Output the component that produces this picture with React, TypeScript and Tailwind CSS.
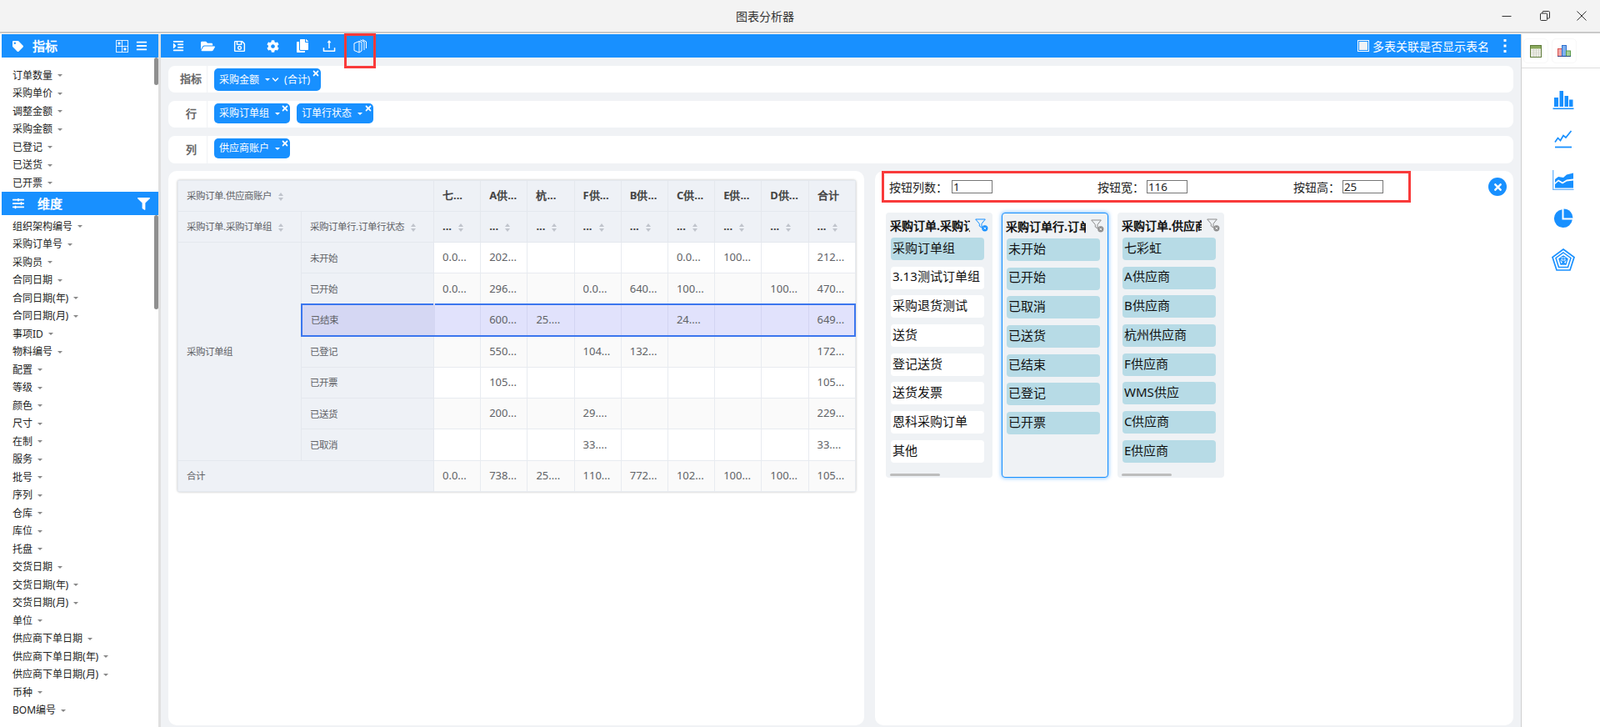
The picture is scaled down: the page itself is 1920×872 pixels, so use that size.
import { FaIndent, FaFolderOpen, FaRegSave, FaCog, FaCopy, FaTag, FaBars, FaSlidersH, FaFilter, FaTimes, FaChevronDown } from 'react-icons/fa';
import { AiOutlineUpload } from 'react-icons/ai';

const metrics = ['订单数量', '采购单价', '调整金额', '采购金额', '已登记', '已送货', '已开票'];
const dimensions = [
    '组织架构编号', '采购订单号', '采购员', '合同日期', '合同日期(年)', '合同日期(月)', '事项ID', '物料编号', '配置', '等级',
    '颜色', '尺寸', '在制', '服务', '批号', '序列', '仓库', '库位', '托盘', '交货日期', '交货日期(年)', '交货日期(月)', '单位',
    '供应商下单日期', '供应商下单日期(年)', '供应商下单日期(月)', '币种', 'BOM编号',
];

const columns = ['七...', 'A供...', '杭...', 'F供...', 'B供...', 'C供...', 'E供...', 'D供...', '合计'];
const rows = [
    { name: '未开始', cells: ['0.0...', '202...', '', '', '', '0.0...', '100...', '', '212...'] },
    { name: '已开始', cells: ['0.0...', '296...', '', '0.0...', '640...', '100...', '', '100...', '470...'] },
    { name: '已结束', cells: ['', '600...', '25....', '', '', '24....', '', '', '649...'] },
    { name: '已登记', cells: ['', '550...', '', '104...', '132...', '', '', '', '172...'] },
    { name: '已开票', cells: ['', '105...', '', '', '', '', '', '', '105...'] },
    { name: '已送货', cells: ['', '200...', '', '29....', '', '', '', '', '229...'] },
    { name: '已取消', cells: ['', '', '', '33....', '', '', '', '', '33....'] },
];
const totals = ['0.0...', '738...', '25....', '110...', '772...', '102...', '100...', '100...', '105...'];

const slicers = [
    { title: '采购订单.采购订单组', active: 1, filtered: true, items: ['采购订单组', '3.13测试订单组', '采购退货测试', '送货', '登记送货', '送货发票', '恩科采购订单', '其他'] },
    { title: '采购订单行.订单行状态', active: 7, focused: true, items: ['未开始', '已开始', '已取消', '已送货', '已结束', '已登记', '已开票'] },
    { title: '采购订单.供应商账户', active: 8, items: ['七彩虹', 'A供应商', 'B供应商', '杭州供应商', 'F供应商', 'WMS供应', 'C供应商', 'E供应商'] },
];

function Caret({ white }: { white?: boolean }) {
    return (
        <span className={`inline-block w-0 h-0 border-x-[3px] border-t-[3px] border-x-transparent ${white ? 'border-t-white' : 'border-t-[#888888]'}`} />
    );
}

function SortIcon() {
    return (
        <span className="inline-flex flex-col gap-[2px] ml-[8px] align-middle">
            <span className="w-0 h-0 border-x-[3.5px] border-b-[4px] border-x-transparent border-b-[#c0c4cc]" />
            <span className="w-0 h-0 border-x-[3.5px] border-t-[4px] border-x-transparent border-t-[#c0c4cc]" />
        </span>
    );
}

function SideItem({ label }: { label: string }) {
    return (
        <div className="flex items-center h-[21.5px] pl-[13px] text-[12px] text-[#222222] whitespace-nowrap">
            {label}
            <span className="ml-[6px] flex"><Caret /></span>
        </div>
    );
}

function Chip({ label, width, height, children }: { label: string; width: string; height: string; children?: React.ReactNode }) {
    return (
        <div className={`relative flex items-center pl-[6px] rounded-[5px] bg-[#1890ff] text-white text-[12px] whitespace-nowrap ${width} ${height}`}>
            {label}
            <span className="ml-[7px] flex"><Caret white /></span>
            {children}
            <FaTimes className="absolute top-[1px] right-[1px] text-[10px] text-white" />
        </div>
    );
}

function FieldRow({ label, height, margin, children }: { label: string; height: string; margin: string; children: React.ReactNode }) {
    return (
        <div className={`flex bg-white rounded-[8px] ${height} ${margin}`}>
            <div className="flex items-center justify-center w-[47px] mr-[8px] pl-[8px] border-r border-[#f0f2f5] text-[13px] font-bold text-[#666666]">{label}</div>
            <div className="flex items-start gap-[8px] pt-[3px]">{children}</div>
        </div>
    );
}

function FilterClear({ blue }: { blue?: boolean }) {
    const color = blue ? '#1890ff' : '#8c8c8c';
    return (
        <svg className="w-[16px] h-[16px]" viewBox="0 0 16 16" fill="none">
            <path d="M0.7 1h11.6L8 6.4V11L5.3 9.2V6.4z" stroke={color} strokeWidth="1" />
            <circle cx="11.8" cy="11.8" r="3.6" fill={color} />
            <path d="M10.4 10.4l2.8 2.8M13.2 10.4l-2.8 2.8" stroke="#ffffff" strokeWidth="0.9" />
        </svg>
    );
}

function BookIcon() {
    return (
        <svg className="w-[17px] h-[17px]" viewBox="0 0 17 17" fill="none" stroke="#ffffff" strokeWidth="1">
            <path d="M1 5L7 2.5V16L1 13.5z" />
            <path d="M7 2.5L10 3.5V14L7 16" />
            <path d="M8.5 1L13 3V13" />
            <path d="M11 0.5L15.5 3V11" />
        </svg>
    );
}

function TableIcon() {
    return (
        <svg className="w-[14px] h-[15px]" viewBox="0 0 14 15">
            <rect x="0.5" y="0.5" width="13" height="14" fill="#f4f4ee" stroke="#5d7a38" />
            <rect x="1" y="1" width="12" height="3.5" fill="#8aa95c" />
            <path d="M1 7h12M1 9.5h12M1 12h12M4.5 4.5V14M7.5 4.5V14M10.5 4.5V14" stroke="#cfd2c4" strokeWidth="0.8" />
        </svg>
    );
}

function BarsIcon() {
    return (
        <svg className="w-[16px] h-[14px]" viewBox="0 0 16 14">
            <rect x="0.5" y="4.5" width="5" height="9" fill="#f3a6a6" stroke="#d9534f" />
            <rect x="5.5" y="0.5" width="5" height="13" fill="#7fb0ee" stroke="#2f6fce" />
            <rect x="10.5" y="7" width="5" height="6.5" fill="#a6cf9a" stroke="#5a9a4a" />
            <path d="M0 13.7h16" stroke="#1f3f8f" />
        </svg>
    );
}

function ChartBar() {
    return (
        <svg className="w-[26px] h-[24px]" viewBox="0 0 26 24" fill="#1890ff">
            <rect x="2" y="9" width="5" height="11" />
            <rect x="8.5" y="1" width="4.5" height="19" />
            <rect x="14.5" y="7" width="4.5" height="13" />
            <rect x="20" y="11.5" width="4.5" height="8.5" />
            <rect x="0.5" y="21.5" width="25" height="1.6" />
        </svg>
    );
}

function ChartLine() {
    return (
        <svg className="w-[22px] h-[22px]" viewBox="0 0 22 22" fill="none" stroke="#1890ff">
            <path d="M1 14.5L4.5 9.5L7.5 12.5L11 6.5L14 9L20.5 1" strokeWidth="1.7" />
            <path d="M1 20.5h20" strokeWidth="1.8" />
        </svg>
    );
}

function ChartArea() {
    return (
        <svg className="w-[26px] h-[24px]" viewBox="0 0 26 24">
            <path d="M0.7 0V23.3H25.5" fill="none" stroke="#6db5fb" strokeWidth="1.3" />
            <path d="M3 11L7 8L13 9L17 5.5L25 3.5V10.5L17 11.5L12 14.5L7 11.5L3 15z" fill="#1890ff" />
            <path d="M3 17L7 13.5L12 16.5L17 13.5L25 12.5V21.5H3z" fill="#1890ff" />
        </svg>
    );
}

function ChartPie() {
    return (
        <svg className="w-[24px] h-[24px]" viewBox="0 0 24 24" fill="#1890ff">
            <path d="M10.5 1.2A11 11 0 1 0 22.8 13.5H10.5z" />
            <path d="M12.5 0.5A11 11 0 0 1 23.5 11.5H12.5z" />
        </svg>
    );
}

function ChartRadar() {
    return (
        <svg className="w-[28px] h-[28px]" viewBox="0 0 28 28" fill="none" stroke="#1890ff">
            <path d="M14 1L27 10.5L22 26H6L1 10.5z" strokeWidth="1.7" />
            <path d="M14 5L23 11.5L19.5 22.5H8.5L5 11.5z" strokeWidth="1.5" />
            <path d="M14 9L19 12.5L17 19H11L9 12.5z" strokeWidth="1.3" />
            <path d="M14 9V19M9 12.5L17 19M19 12.5L11 19M9 12.5H19" strokeWidth="1.1" />
        </svg>
    );
}

const inputClass = 'w-[49px] h-[16px] pl-[1px] border border-[#767676] text-[13.33px] leading-none outline-none';

export default function App() {
    return (
        <div lang="zh-CN" className="w-[1920px] h-[872px] flex flex-col overflow-hidden bg-white text-[#222222] font-['Liberation_Sans','Noto_Sans_CJK_SC',sans-serif]">
            {/* Title bar */}
            <div className="relative flex items-center justify-center h-[40px] pr-[84px] bg-[#f3f3f3] border-b-2 border-[#c9c9c9] shrink-0">
                <span className="text-[14px] text-[#333333]">图表分析器</span>
                <div className="absolute right-0 top-0 h-[38px] flex items-center">
                    <div className="w-[44px] flex justify-center">
                        <svg className="w-[12px] h-[12px]" viewBox="0 0 12 12"><path d="M0.5 6.5h11" stroke="#333333" /></svg>
                    </div>
                    <div className="w-[44px] ml-[2px] flex justify-center">
                        <svg className="w-[12px] h-[12px]" viewBox="0 0 12 12" fill="none" stroke="#333333">
                            <rect x="0.5" y="3" width="8" height="8.5" rx="1" />
                            <path d="M3 3V1.5a1 1 0 0 1 1-1h6.5a1 1 0 0 1 1 1V8a1 1 0 0 1-1 1H8.5" />
                        </svg>
                    </div>
                    <div className="w-[44px] flex justify-center">
                        <svg className="w-[12px] h-[12px]" viewBox="0 0 12 12"><path d="M0.5 0.5l11 11M11.5 0.5l-11 11" stroke="#333333" /></svg>
                    </div>
                </div>
            </div>

            <div className="flex flex-1 min-h-0 pt-[1px] pl-[2px] bg-white">
                {/* Left field list */}
                <aside className="w-[188px] shrink-0 flex flex-col">
                    <div className="flex items-center h-[28px] bg-[#1890ff] text-white shrink-0">
                        <FaTag className="ml-[13px] text-[13px]" />
                        <span className="ml-[11px] text-[15px] font-bold">指标</span>
                        <svg className="ml-auto w-[15px] h-[15px]" viewBox="0 0 15 15" fill="none" stroke="#ffffff" strokeOpacity="0.85">
                            <rect x="0.5" y="0.5" width="14" height="14" />
                            <path d="M7.5 0.5v14M0.5 7.5h14" />
                            <rect x="3" y="3" width="2" height="2" fill="#ffffff" />
                            <rect x="10" y="10" width="2" height="2" fill="#ffffff" />
                        </svg>
                        <FaBars className="ml-[9px] mr-[13px] text-[14px]" />
                    </div>
                    <div className="relative h-[161px] pt-[11px] shrink-0 overflow-hidden">
                        {metrics.map((m) => <SideItem key={m} label={m} />)}
                        <div className="absolute top-0 right-0 w-[5px] h-[33px] rounded-[3px] bg-[#8f8f8f]" />
                    </div>
                    <div className="flex items-center h-[28px] bg-[#1890ff] text-white shrink-0">
                        <FaSlidersH className="ml-[13px] text-[14px]" />
                        <span className="ml-[16px] text-[15px] font-bold">维度</span>
                        <FaFilter className="ml-auto mr-[10px] text-[15px]" />
                    </div>
                    <div className="relative flex-1 pt-[3px] overflow-hidden">
                        {dimensions.map((d) => <SideItem key={d} label={d} />)}
                        <div className="absolute top-0 right-0 w-[5px] h-[113px] rounded-[3px] bg-[#8f8f8f]" />
                    </div>
                </aside>

                <div className="w-[3px] shrink-0 bg-[#e0e0e0]" />

                {/* Main area */}
                <main className="w-[1632px] shrink-0 flex flex-col bg-[#f0f2f5]">
                    <div className="flex items-center h-[28px] shrink-0 pl-[3px] bg-[#1890ff] text-white">
                        <div className="w-[36px] flex justify-center"><FaIndent className="text-[14px]" /></div>
                        <div className="w-[34px] flex justify-center"><FaFolderOpen className="text-[17px]" /></div>
                        <div className="w-[42px] flex justify-center"><FaRegSave className="text-[15px]" /></div>
                        <div className="w-[38px] flex justify-center"><FaCog className="text-[15px]" /></div>
                        <div className="w-[34px] flex justify-center"><FaCopy className="text-[16px]" /></div>
                        <div className="w-[30px] flex justify-center"><AiOutlineUpload className="text-[20px]" /></div>
                        <div className="relative w-[44px] flex justify-center">
                            <BookIcon />
                            <div className="absolute left-[3px] top-[-7px] w-[38px] h-[42px] border-[3px] border-[#f93a3a]" />
                        </div>
                        <div className="ml-auto flex items-center">
                            <span className="w-[14px] h-[14px] p-[1px] border border-white">
                                <span className="block w-full h-full bg-[#f0f2f5]" />
                            </span>
                            <span className="ml-[4px] text-[14px]">多表关联是否显示表名</span>
                            <svg className="ml-[17px] mr-[17px] w-[4px] h-[16px]" viewBox="0 0 4 16" fill="#ffffff">
                                <rect x="0.5" y="0" width="3" height="3" />
                                <rect x="0.5" y="6.5" width="3" height="3" />
                                <rect x="0.5" y="13" width="3" height="3" />
                            </svg>
                        </div>
                    </div>

                    <div className="flex-1 min-h-0 flex flex-col px-[9px]">
                        <FieldRow label="指标" height="h-[32px]" margin="mt-[10px]">
                            <Chip label="采购金额" width="w-[128px]" height="h-[27px]">
                                <FaChevronDown className="ml-[2px] text-[9px]" />
                                <span className="ml-[6px] text-[12px]">(合计)</span>
                            </Chip>
                        </FieldRow>
                        <FieldRow label="行" height="h-[32px]" margin="mt-[10px]">
                            <Chip label="采购订单组" width="w-[91px]" height="h-[24px]" />
                            <Chip label="订单行状态" width="w-[92px]" height="h-[24px]" />
                        </FieldRow>
                        <FieldRow label="列" height="h-[33px]" margin="mt-[10px]">
                            <Chip label="供应商账户" width="w-[91px]" height="h-[24px]" />
                        </FieldRow>

                        <div className="flex gap-[13px] mt-[9px] h-[665px]">
                            {/* Pivot table */}
                            <section className="w-[835px] shrink-0 bg-white rounded-[10px] pt-[11px] pl-[11px]">
                                <table className="w-[813px] table-fixed border-collapse rounded-[3px] shadow-[0_0_3px_rgba(0,0,0,0.28)] text-[#606266]">
                                    <colgroup>
                                        <col className="w-[148px]" />
                                        <col className="w-[159px]" />
                                        {columns.map((c) => <col key={c} className="w-[56.2px]" />)}
                                    </colgroup>
                                    <thead>
                                        <tr className="h-[37px] bg-[#eef1f6]">
                                            <th colSpan={2} className="pl-[10px] text-left text-[11.5px] font-normal border border-[#e4e8ee]">
                                                采购订单.供应商账户<SortIcon />
                                            </th>
                                            {columns.map((c) => (
                                                <th key={c} className="pl-[10px] text-left text-[13px] font-bold text-[#444444] whitespace-nowrap border border-[#e4e8ee]">{c}</th>
                                            ))}
                                        </tr>
                                        <tr className="h-[37px] bg-[#eef1f6]">
                                            <th className="pl-[10px] text-left text-[11.5px] font-normal whitespace-nowrap border border-[#e4e8ee]">采购订单.采购订单组<SortIcon /></th>
                                            <th className="pl-[10px] text-left text-[11.5px] font-normal whitespace-nowrap border border-[#e4e8ee]">采购订单行.订单行状态<SortIcon /></th>
                                            {columns.map((c) => (
                                                <th key={c} className="pl-[10px] text-left text-[13px] font-bold text-[#444444] whitespace-nowrap border border-[#e4e8ee]">...<SortIcon /></th>
                                            ))}
                                        </tr>
                                    </thead>
                                    <tbody>
                                        {rows.map((r, i) => {
                                            const picked = r.name === '已结束';
                                            return (
                                                <tr key={r.name} className={`h-[37.4px] ${picked ? 'bg-[#e1e2fc]' : i % 2 === 1 ? 'bg-[#fafafa]' : 'bg-white'}`}>
                                                    {i === 0 && (
                                                        <td rowSpan={7} className="pl-[10px] text-[11.5px] bg-[#eef1f6] border border-[#e4e8ee]">采购订单组</td>
                                                    )}
                                                    <td className={`pl-[10px] text-[11.5px] border ${picked ? 'bg-[#d5d7f3] border-[#3b76ee] border-2 border-r-[#d5d7f3]' : 'bg-[#eef1f6] border-[#e4e8ee]'}`}>{r.name}</td>
                                                    {r.cells.map((v, j) => (
                                                        <td
                                                            key={j}
                                                            className={`pl-[10px] text-[13px] whitespace-nowrap ${picked
                                                                ? `border-y-2 border-y-[#3b76ee] border-l border-l-[#d3d5f2] ${j === 8 ? 'border-r-2 border-r-[#3b76ee]' : 'border-r border-r-[#d3d5f2]'}`
                                                                : 'border border-[#e8ebf0]'}`}
                                                        >
                                                            {v}
                                                        </td>
                                                    ))}
                                                </tr>
                                            );
                                        })}
                                        <tr className="h-[37.4px] bg-[#fafafa]">
                                            <td colSpan={2} className="pl-[10px] text-[11.5px] bg-[#eef1f6] border border-[#e4e8ee]">合计</td>
                                            {totals.map((v, j) => (
                                                <td key={j} className="pl-[10px] text-[13px] whitespace-nowrap border border-[#e8ebf0]">{v}</td>
                                            ))}
                                        </tr>
                                    </tbody>
                                </table>
                            </section>

                            {/* Slicer panel */}
                            <section className="w-[766px] shrink-0 bg-white rounded-[10px]">
                                <div className="flex items-center pl-[8px] pr-[8px]">
                                    <div className="flex items-center w-[635px] h-[38px] pl-[6px] border-[3px] border-[#f93a3a] text-[14px] text-[#222222]">
                                        <label className="flex items-center w-[250px]">
                                            按钮列数：
                                            <input defaultValue="1" className={`ml-[5px] ${inputClass}`} />
                                        </label>
                                        <label className="flex items-center w-[235px]">
                                            按钮宽：
                                            <input defaultValue="116" className={`ml-[3px] ${inputClass}`} />
                                        </label>
                                        <label className="flex items-center">
                                            按钮高：
                                            <input defaultValue="25" className={`ml-[3px] ${inputClass}`} />
                                        </label>
                                    </div>
                                    <span className="ml-auto flex items-center justify-center w-[22px] h-[22px] rounded-full bg-[#1890ff]">
                                        <FaTimes className="text-[13px] text-white" />
                                    </span>
                                </div>

                                <div className="flex gap-[11px] mt-[12px] pl-[13px]">
                                    {slicers.map((s) => (
                                        <div
                                            key={s.title}
                                            className={`relative w-[128px] h-[318px] rounded-[4px] bg-[#eff2f5] ${s.focused ? 'border border-[#1890ff] shadow-[0_0_5px_rgba(24,144,255,0.7)] pl-[5px]' : 'pl-[6px]'}`}
                                        >
                                            <div className="flex items-center h-[30px]">
                                                <span className="w-[96px] -ml-[1px] overflow-hidden whitespace-nowrap text-[14px] font-bold text-[#111111]">{s.title}</span>
                                                <span className="ml-[6px]"><FilterClear blue={s.filtered} /></span>
                                            </div>
                                            {s.items.map((item, i) => (
                                                <div
                                                    key={item}
                                                    className={`flex items-center w-[112px] h-[27px] mb-[7.7px] pl-[2px] pb-[3px] rounded-[4px] text-[15px] whitespace-nowrap overflow-hidden text-[#111111] ${i < s.active ? 'bg-[#b7dbe6]' : 'bg-white'}`}
                                                >
                                                    {item}
                                                </div>
                                            ))}
                                            {!s.focused && <div className="absolute left-[5px] bottom-[2px] w-[60px] h-[3px] rounded-[2px] bg-[#bdbdbd]" />}
                                        </div>
                                    ))}
                                </div>
                            </section>
                        </div>
                    </div>
                </main>

                {/* Chart types */}
                <aside className="flex-1 flex flex-col border-l border-[#cfcfcf]">
                    <div className="flex items-center gap-[4px] h-[41px] pl-[2px] border-b border-[#dddddd] shrink-0">
                        <div className="flex items-center justify-center w-[30px] h-[30px] rounded-[5px] border border-[#f8f8f8]"><TableIcon /></div>
                        <div className="flex items-center justify-center w-[30px] h-[30px] rounded-[5px] border border-[#f8f8f8]"><BarsIcon /></div>
                    </div>
                    <div className="flex flex-col items-center mt-[26px] pl-[5px]">
                        <div className="h-[24px] flex items-center"><ChartBar /></div>
                        <div className="mt-[23px] h-[24px] flex items-center"><ChartLine /></div>
                        <div className="mt-[25px] h-[24px] flex items-center"><ChartArea /></div>
                        <div className="mt-[22px] h-[24px] flex items-center"><ChartPie /></div>
                        <div className="mt-[24px] h-[28px] flex items-center"><ChartRadar /></div>
                    </div>
                </aside>
            </div>
        </div>
    );
}
